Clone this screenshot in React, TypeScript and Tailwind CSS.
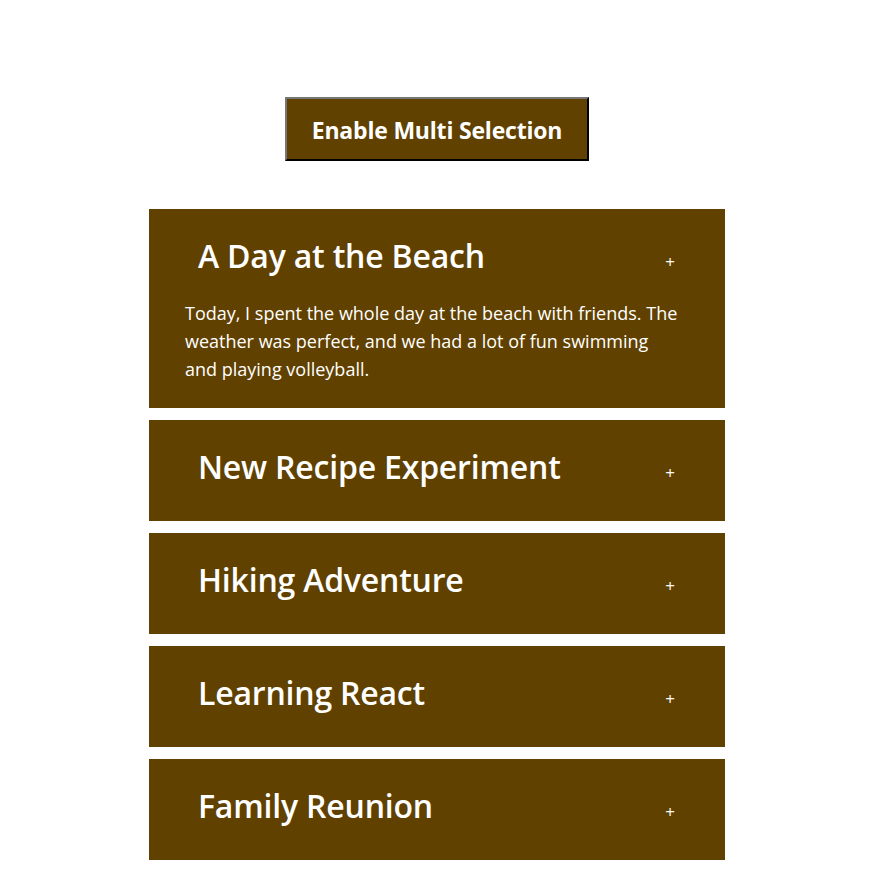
import { useState } from "react";

const entries = [
  {
    id: 1,
    title: "A Day at the Beach",
    body: "Today, I spent the whole day at the beach with friends. The weather was perfect, and we had a lot of fun swimming and playing volleyball.",
  },
  { id: 2, title: "New Recipe Experiment", body: "I tried a new recipe for dinner tonight." },
  { id: 3, title: "Hiking Adventure", body: "We hiked up the mountain trail this morning." },
  { id: 4, title: "Learning React", body: "Spent the afternoon learning about hooks." },
  { id: 5, title: "Family Reunion", body: "The whole family got together for the weekend." },
];

export default function App() {
  const [multi, setMulti] = useState(false);
  const [open, setOpen] = useState<number[]>([1]);

  const toggle = (id: number) => {
    if (multi) {
      setOpen((o) => (o.includes(id) ? o.filter((x) => x !== id) : [...o, id]));
    } else {
      setOpen((o) => (o.includes(id) ? [] : [id]));
    }
  };

  return (
    <div
      className="w-[874px] min-h-[890px] bg-white flex flex-col items-center pt-[97px]"
      style={{ fontFamily: '"Open Sans", "Noto Sans", sans-serif' }}
    >
      <button
        onClick={() => setMulti((m) => !m)}
        className="w-[304px] h-[64px] bg-[#614100] text-white text-[23px] font-bold border-2 border-t-[#767676] border-l-[#767676] border-r-black border-b-black tracking-[-0.2px] pt-[2px]"
      >
        Enable Multi Selection
      </button>

      <div className="w-[576px] mt-[48px] flex flex-col gap-[12px]">
        {entries.map((e) => {
          const isOpen = open.includes(e.id);
          return (
            <div key={e.id} className="bg-[#614100] text-white">
              <div
                onClick={() => toggle(e.id)}
                className="flex items-center justify-between pl-[49px] pr-[50px] pt-[26px] cursor-pointer"
              >
                <h3 className="text-[32px] font-semibold leading-[42px] tracking-[-0.2px]">{e.title}</h3>
                <span className="text-[17px] mt-[12px]">+</span>
              </div>
              {isOpen ? (
                <div className="pl-[36px] pr-[44px] pt-[22px] pb-[25px] text-[18px] leading-[28px]">{e.body}</div>
              ) : (
                <div className="h-[33px]" />
              )}
            </div>
          );
        })}
      </div>
    </div>
  );
}
